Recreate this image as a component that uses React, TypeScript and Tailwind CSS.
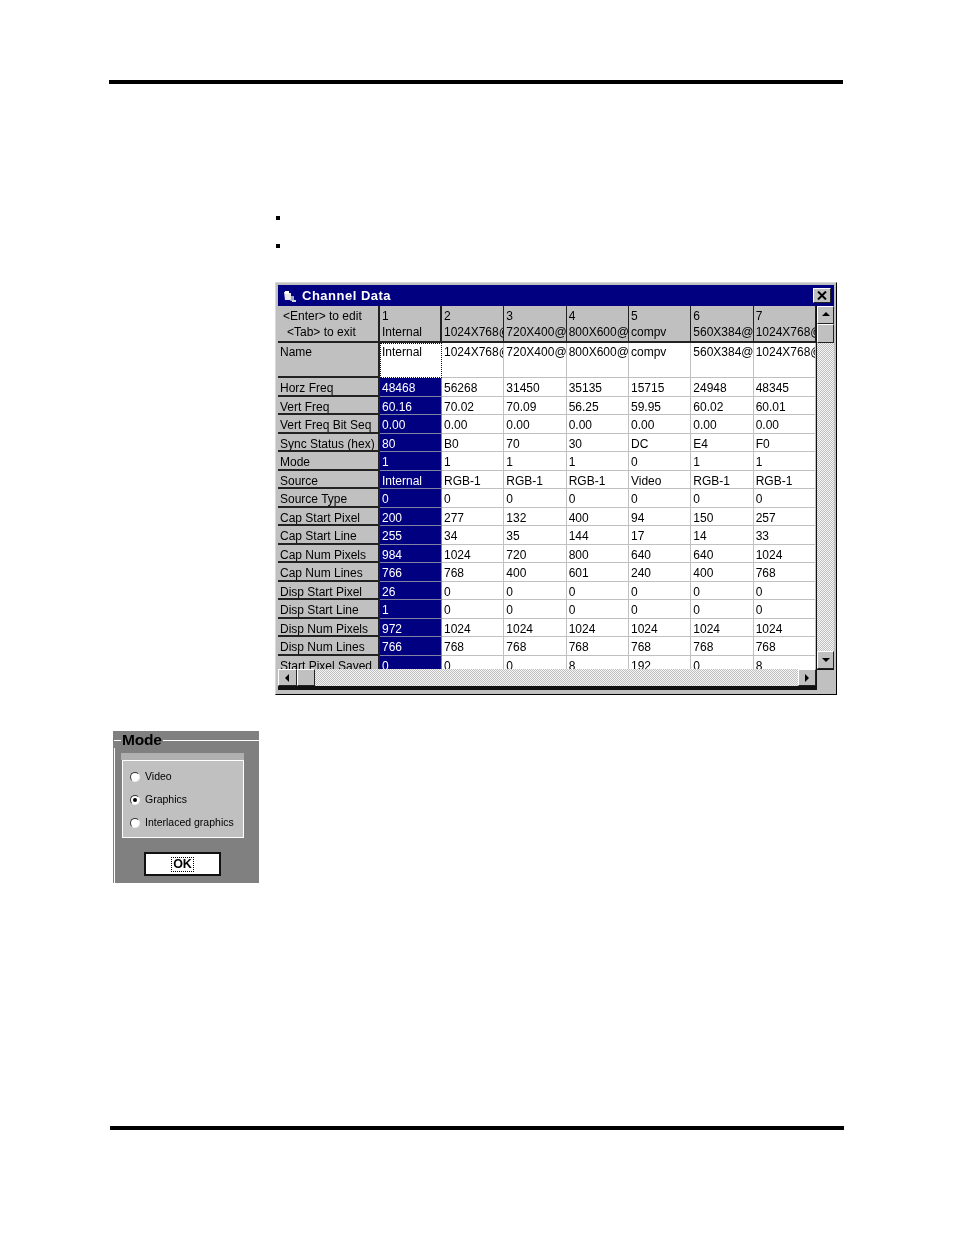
const font = "font-['Liberation_Sans',Arial,sans-serif]";
const dither = 'bg-[repeating-conic-gradient(#c0c0c0_0_25%,#f4f4f4_0_50%)] bg-[length:2px_2px]';
const bevel = 'bg-[#c0c0c0] border border-t-white border-l-white border-r-[#222] border-b-[#222]';

const colWidths = ['w-[62px]', 'w-[62.33px]', 'w-[62.33px]', 'w-[62.33px]', 'w-[62.33px]', 'w-[62.33px]', 'w-[62.35px]'];

const headers = [
  ['1', 'Internal'],
  ['2', '1024X768@60Hz'],
  ['3', '720X400@70Hz'],
  ['4', '800X600@56Hz'],
  ['5', 'compv'],
  ['6', '560X384@60Hz'],
  ['7', '1024X768@60Hz'],
];

const rows: [string, string[]][] = [
  ['Horz Freq', ['48468', '56268', '31450', '35135', '15715', '24948', '48345']],
  ['Vert Freq', ['60.16', '70.02', '70.09', '56.25', '59.95', '60.02', '60.01']],
  ['Vert Freq Bit Seq', ['0.00', '0.00', '0.00', '0.00', '0.00', '0.00', '0.00']],
  ['Sync Status (hex)', ['80', 'B0', '70', '30', 'DC', 'E4', 'F0']],
  ['Mode', ['1', '1', '1', '1', '0', '1', '1']],
  ['Source', ['Internal', 'RGB-1', 'RGB-1', 'RGB-1', 'Video', 'RGB-1', 'RGB-1']],
  ['Source Type', ['0', '0', '0', '0', '0', '0', '0']],
  ['Cap Start Pixel', ['200', '277', '132', '400', '94', '150', '257']],
  ['Cap Start Line', ['255', '34', '35', '144', '17', '14', '33']],
  ['Cap Num Pixels', ['984', '1024', '720', '800', '640', '640', '1024']],
  ['Cap Num Lines', ['766', '768', '400', '601', '240', '400', '768']],
  ['Disp Start Pixel', ['26', '0', '0', '0', '0', '0', '0']],
  ['Disp Start Line', ['1', '0', '0', '0', '0', '0', '0']],
  ['Disp Num Pixels', ['972', '1024', '1024', '1024', '1024', '1024', '1024']],
  ['Disp Num Lines', ['766', '768', '768', '768', '768', '768', '768']],
  ['Start Pixel Saved', ['0', '0', '0', '8', '192', '0', '8']],
];

function Arrow({ dir }: { dir: 'up' | 'down' | 'left' | 'right' }) {
  const points = {
    up: '4,1 0,5 8,5',
    down: '0,2 8,2 4,6',
    left: '5,0 5,8 1,4',
    right: '2,0 2,8 6,4',
  }[dir];
  return (
    <svg width="8" height="8" viewBox="0 0 8 8">
      <polygon points={points} fill="#000" />
    </svg>
  );
}

function TitleIcon() {
  return (
    <svg width="14" height="14" viewBox="0 0 14 14" className="shrink-0">
      <path d="M1 3h3l1 1h3v7H2z" fill="#e8e8e8" />
      <path d="M2 2h4v3H2z" fill="#fff" />
      <path d="M8 7h3v5H7l1-2z" fill="#9fa8c8" />
      <path d="M9 11h4v2H9z" fill="#d8d8d8" />
    </svg>
  );
}

function ChannelWindow() {
  return (
    <div className={`${font} w-[562px] h-[413px] border border-t-[#d8d8d8] border-l-[#d8d8d8] border-r-black border-b-black bg-[#c0c0c0] p-[2px] text-[12px] text-black blur-[0.3px]`}>
      <div className="h-[21px] bg-[#000080] flex items-center pl-[5px] pr-[3px] gap-[5px]">
        <TitleIcon />
        <span className="text-white font-bold text-[13px] tracking-[0.5px] flex-1">Channel Data</span>
        <div className={`${bevel} w-[18px] h-[15px] flex items-center justify-center`}>
          <svg width="10" height="9" viewBox="0 0 10 9">
            <path d="M1 0.5l8 8M9 0.5l-8 8" stroke="#000" strokeWidth="2" />
          </svg>
        </div>
      </div>
      <div className="flex h-[384px]">
        <div className="w-[538px] flex flex-col">
          <div className="h-[363px] overflow-hidden bg-white">
            <div className="flex h-[37px]">
              <div className="w-[102px] bg-[#c0c0c0] border-r-2 border-b-2 border-[#222] leading-[16px] pt-[2px] whitespace-nowrap">
                <div className="pl-[5px]">&lt;Enter&gt; to edit</div>
                <div className="pl-[9px]">&lt;Tab&gt; to exit</div>
              </div>
              {headers.map((h, i) => (
                <div
                  key={h[0]}
                  className={`${colWidths[i]} bg-[#c0c0c0] border-b-2 border-[#222] leading-[16px] pt-[2px] pl-[2px] overflow-hidden whitespace-nowrap ${
                    i === 0 ? 'border-r-2' : 'border-r'
                  }`}
                >
                  <div>{h[0]}</div>
                  <div>{h[1]}</div>
                </div>
              ))}
            </div>
            <div className="flex h-[35px]">
              <div className="w-[102px] bg-[#c0c0c0] border-r-2 border-b-2 border-[#222] pl-[2px] leading-[16px] pt-[1px]">Name</div>
              {headers.map((h, i) => (
                <div
                  key={h[0]}
                  className={`${colWidths[i]} bg-white leading-[16px] overflow-hidden whitespace-nowrap ${
                    i === 0 ? 'border border-dotted border-[#111] pl-[1px] pt-0' : 'border-r border-b border-[#c0c0c0] pl-[2px] pt-[1px]'
                  }`}
                >
                  {h[1]}
                </div>
              ))}
            </div>
            {rows.map(([label, values]) => (
              <div key={label} className="flex h-[18.53px]">
                <div className="w-[102px] bg-[#c0c0c0] border-r-2 border-b-2 border-[#222] pl-[2px] pt-[2px] leading-[17px] whitespace-nowrap overflow-hidden">
                  {label}
                </div>
                {values.map((v, i) => (
                  <div
                    key={i}
                    className={`${colWidths[i]} leading-[17px] pl-[2px] pt-[2px] whitespace-nowrap overflow-hidden border-r border-b ${
                      i === 0 ? 'bg-[#000080] text-white border-[#8080a0]' : 'bg-white border-[#c0c0c0]'
                    }`}
                  >
                    {v}
                  </div>
                ))}
              </div>
            ))}
          </div>
          <div className={`h-[17px] flex justify-between ${dither}`}>
            <div className="flex">
              <div className={`${bevel} w-[19px] h-[17px] flex items-center justify-center`}>
                <Arrow dir="left" />
              </div>
              <div className={`${bevel} w-[18px] h-[17px]`} />
            </div>
            <div className={`${bevel} w-[18px] h-[17px] flex items-center justify-center`}>
              <Arrow dir="right" />
            </div>
          </div>
          <div className="h-[4px] bg-[#111]" />
        </div>
        <div className="w-[18px] flex flex-col border-l border-[#111]">
          <div className={`${bevel} h-[18px] flex items-center justify-center`}>
            <Arrow dir="up" />
          </div>
          <div className={`${bevel} h-[19px]`} />
          <div className={`h-[308px] ${dither}`} />
          <div className={`${bevel} h-[18px] flex items-center justify-center`}>
            <Arrow dir="down" />
          </div>
          <div className="flex-1 bg-[#c0c0c0] border-t border-[#111]" />
        </div>
      </div>
    </div>
  );
}

function Radio({ label, checked }: { label: string; checked?: boolean }) {
  return (
    <div className="flex items-center h-[23px] pl-[7px] gap-[5px]">
      <span className="w-[10px] h-[10px] rounded-full bg-white border border-t-[#333] border-l-[#333] border-r-[#eee] border-b-[#eee] flex items-center justify-center">
        {checked && <span className="w-[4px] h-[4px] rounded-full bg-black" />}
      </span>
      <span className="text-[10.5px] leading-none">{label}</span>
    </div>
  );
}

function ModeDialog() {
  return (
    <div className={`${font} w-[146px] h-[152px] bg-[#808080] text-black pt-[1px] blur-[0.2px]`}>
      <div className="flex items-center h-[16px]">
        <div className="w-[7px] h-[1px] bg-white ml-[1px]" />
        <span className="font-bold text-[15.5px] leading-none px-[1px] tracking-[-0.2px]">Mode</span>
        <div className="flex-1 h-[1px] bg-white" />
      </div>
      <div className="ml-[1px] h-[135px] border-l border-white pt-[5px]">
        <div className="ml-[6px] w-[123px] h-[7px] bg-[#b0b0b0]" />
        <div className="ml-[7px] w-[122px] h-[78px] bg-[#c0c0c0] border border-white pt-[4px]">
          <Radio label="Video" />
          <Radio label="Graphics" checked />
          <Radio label="Interlaced graphics" />
        </div>
        <div className="ml-[29px] mt-[14px] w-[77px] h-[24px] bg-white border-2 border-[#111] flex items-center justify-center">
          <span className="border border-dotted border-black font-bold text-[12.5px] leading-[13px] px-[1px]">OK</span>
        </div>
      </div>
    </div>
  );
}

export default function App() {
  return (
    <div className="w-[954px] h-[1235px] bg-white overflow-hidden pt-[80px]">
      <div className="ml-[109px] w-[734px] h-[4px] bg-black" />
      <div className="ml-[276px] mt-[132px] w-[4px] h-[4px] bg-black" />
      <div className="ml-[276px] mt-[24px] w-[4px] h-[4px] bg-black" />
      <div className="ml-[275px] mt-[34px]">
        <ChannelWindow />
      </div>
      <div className="ml-[113px] mt-[36px]">
        <ModeDialog />
      </div>
      <div className="ml-[110px] mt-[243px] w-[734px] h-[4px] bg-black" />
    </div>
  );
}
